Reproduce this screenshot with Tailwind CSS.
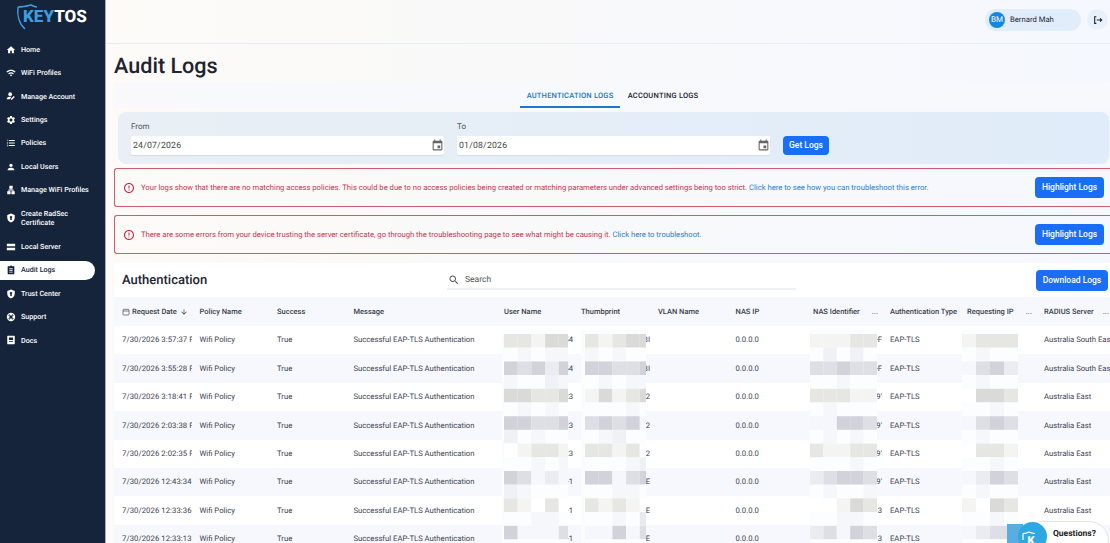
<!DOCTYPE html>
<html lang="en">
<head>
  <meta charset="UTF-8" />
  <title>Audit Logs</title>
  <script src="https://cdn.jsdelivr.net/npm/@tailwindcss/browser@4"></script>
</head>
<body class="h-[543px] w-[1110px] overflow-hidden flex font-['Roboto',sans-serif] [text-rendering:geometricPrecision] text-[#1d2430] bg-gradient-to-r from-[#fdfbf7] via-[#f9f9fa] to-[#f5f8fe]">

  <!-- sidebar -->
  <aside class="w-[106px] shrink-0 bg-[#15233b] border-r border-[#a9aebb] text-white">
    <div class="h-[38px] pl-[17px] pt-[4px] flex items-start relative">
      <svg class="absolute left-[16px] top-[4px] w-[24px] h-[27px]" viewBox="0 0 24 27" fill="none" stroke="#3aa0e0" stroke-width="1.5"><path d="M2 3 C7 3 11 2 15 1 C17 2 19 3 21 3"/><path d="M2 3 C1 11 3 20 9 25"/></svg>
      <span class="relative ml-[6px] mt-[3px] text-[17px] leading-[20px] font-extrabold"><span class="text-[#3aa0e0]">KEY</span>TOS</span>
    </div>
    <nav id="nav" class="mt-[2px] pr-[10px] flex flex-col gap-[4px] text-[7.150px] leading-[9.700px] font-medium"></nav>
  </aside>

  <!-- main -->
  <main class="flex-1 min-w-0 flex flex-col">
    <header class="h-[44px] shrink-0 border-b border-[#e8ecf4] flex items-start justify-end pt-[9px] pr-[2px] gap-[6px]">
      <div class="w-[96px] h-[22px] rounded-full bg-[#e1edfb] flex items-center pl-[4px] gap-[5px]">
        <span class="w-[16px] h-[16px] rounded-full bg-[#1288e0] text-white text-[8px] flex items-center justify-center">BM</span>
        <span class="text-[7.700px]">Bernard Mah</span>
      </div>
      <div class="w-[21px] h-[21px] rounded-full bg-[#e8f1fb] flex items-center justify-center">
        <svg class="w-[10px] h-[10px]" viewBox="0 0 12 12" fill="none" stroke="#1d2430" stroke-width="1.3"><path d="M4 2H2v8h2M4.500 6h6M8.500 4l2 2-2 2"/></svg>
      </div>
    </header>

    <div class="pl-[8px]">
      <h1 class="h-[38px] text-[21.600px] leading-[46px] font-medium">Audit Logs</h1>

      <!-- tabs -->
      <div class="h-[26px] bg-[#f7f9fd]/80 flex justify-center pl-[2px] text-[7.500px] font-medium tracking-[0.200px]">
        <div class="w-[100px] h-[26px] leading-[27px] text-center text-[#2077c4] border-b-2 border-[#2077c4]">AUTHENTICATION LOGS</div>
        <div class="w-[86px] h-[26px] leading-[27px] text-center">ACCOUNTING LOGS</div>
      </div>

      <!-- date filter -->
      <div class="ml-[4px] mr-[1px] mt-[4px] h-[52px] rounded-lg bg-gradient-to-r from-[#e9eff5] to-[#e0ecf9] pl-[13px] flex items-end pb-[9px]">
        <div class="w-[313px]">
          <div class="text-[8px] leading-[12px] mb-[3px] text-[#555]">From</div>
          <div class="h-[19px] bg-white rounded-[2px] shadow-[0_1px_1px_#d5dbe3] flex items-center justify-between pt-[2px] pl-[2px] pr-[0.500px] text-[8.700px] text-[#444] tracking-[0.200px]">24/07/2026
            <svg class="w-[13px] h-[13px] mb-[2px]" viewBox="0 0 24 24" fill="#666"><path d="M17 12h-5v5h5v-5zM16 1v2H8V1H6v2H5c-1.110 0-1.990.900-1.990 2L3 19c0 1.100.890 2 2 2h14c1.100 0 2-.900 2-2V5c0-1.100-.900-2-2-2h-1V1h-2zm3 18H5V8h14v11z"/></svg>
          </div>
        </div>
        <div class="w-[313px] ml-[13px]">
          <div class="text-[8px] leading-[12px] mb-[3px] text-[#555]">To</div>
          <div class="h-[19px] bg-white rounded-[2px] shadow-[0_1px_1px_#d5dbe3] flex items-center justify-between pt-[2px] pl-[2px] pr-[0.500px] text-[8.700px] text-[#444] tracking-[0.200px]">01/08/2026
            <svg class="w-[13px] h-[13px] mb-[2px]" viewBox="0 0 24 24" fill="#666"><path d="M17 12h-5v5h5v-5zM16 1v2H8V1H6v2H5c-1.110 0-1.990.900-1.990 2L3 19c0 1.100.890 2 2 2h14c1.100 0 2-.900 2-2V5c0-1.100-.900-2-2-2h-1V1h-2zm3 18H5V8h14v11z"/></svg>
          </div>
        </div>
        <button class="ml-[13px] w-[46px] h-[19px] rounded-[4px] bg-[#1a6ef5] text-white text-[8.500px] font-medium">Get Logs</button>
      </div>

      <!-- alerts -->
      <div class="mt-[4px] h-[39px] border border-r-0 border-[#cf5b6b] rounded-l-[3px] flex items-center pl-[8px] pr-[6px] text-[7.650px] text-[#c8334f]">
        <svg class="w-[12px] h-[12px] shrink-0" viewBox="0 0 24 24" fill="#c8203f"><path d="M11 15h2v2h-2zm0-8h2v6h-2zm.990-5C6.470 2 2 6.480 2 12s4.470 10 9.990 10C17.520 22 22 17.520 22 12S17.520 2 11.990 2zM12 20c-4.420 0-8-3.580-8-8s3.580-8 8-8 8 3.580 8 8-3.580 8-8 8z"/></svg>
        <p class="ml-[6px] pt-[1px] flex-1 whitespace-nowrap">Your logs show that there are no matching access policies. This could be due to no access policies being created or matching parameters under advanced settings being too strict. <a class="text-[#2b7fd0]">Click here to see how you can troubleshoot this error.</a></p>
        <button class="w-[69px] h-[21px] rounded-[4px] bg-[#1a6ef5] text-white text-[8.500px] font-medium">Highlight Logs</button>
      </div>
      <div class="mt-[8px] h-[39px] border border-r-0 border-[#cf5b6b] rounded-l-[3px] flex items-center pl-[8px] pr-[6px] text-[7.650px] text-[#c8334f]">
        <svg class="w-[12px] h-[12px] shrink-0" viewBox="0 0 24 24" fill="#c8203f"><path d="M11 15h2v2h-2zm0-8h2v6h-2zm.990-5C6.470 2 2 6.480 2 12s4.470 10 9.990 10C17.520 22 22 17.520 22 12S17.520 2 11.990 2zM12 20c-4.420 0-8-3.580-8-8s3.580-8 8-8 8 3.580 8 8-3.580 8-8 8z"/></svg>
        <p class="ml-[6px] pt-[1px] flex-1 whitespace-nowrap">There are some errors from your device trusting the server certificate, go through the troubleshooting page to see what might be causing it. <a class="text-[#2b7fd0]">Click here to troubleshoot.</a></p>
        <button class="w-[69px] h-[21px] rounded-[4px] bg-[#1a6ef5] text-white text-[8.500px] font-medium">Highlight Logs</button>
      </div>

      <!-- table card -->
      <section class="mt-[9px] bg-white">
        <div class="h-[34px] flex items-start pl-[8px] pr-[2px]">
          <h2 class="w-[325px] mt-[9px] text-[13px] leading-[18px] font-medium">Authentication</h2>
          <div class="w-[349px] h-[20px] mt-[7px] pt-[2px] border-b-2 border-[#eef1f5] flex items-center pl-[1px] text-[8.500px] text-[#555]">
            <svg class="w-[12px] h-[12px] mr-[5px]" viewBox="0 0 24 24" fill="#555"><path d="M15.500 14h-.790l-.280-.270C15.410 12.590 16 11.110 16 9.500 16 5.910 13.090 3 9.500 3S3 5.910 3 9.500 5.910 16 9.500 16c1.610 0 3.090-.590 4.230-1.570l.270.280v.790l5 4.990L20.490 19l-4.990-5zm-6 0C7.010 14 5 11.990 5 9.500S7.010 5 9.500 5 14 7.010 14 9.500 11.990 14 9.500 14z"/></svg>
            Search
          </div>
          <button class="ml-auto w-[72px] h-[21px] mt-[7px] rounded-[4px] bg-[#1a6ef5] text-white text-[8.500px] font-medium">Download Logs</button>
        </div>
        <div id="table" class="relative w-[999px] text-[7.700px] text-[#3b4250]"></div>
      </section>
    </div>
  </main>

  <!-- chat widget -->
  <div class="absolute left-[1007px] top-[524px] w-[16px] h-[19px] bg-[#5aade0]"></div>
  <div class="absolute left-[1022px] top-[521px] w-[87px] h-[40px] rounded-[20px] bg-white border border-[#e4e4e4] pl-[30px] pt-[6px] text-[8.500px] font-bold text-[#222]">Questions?</div>
  <div class="absolute left-[1018px] top-[522px] w-[29px] h-[29px] rounded-full bg-[#2ea8e0] flex justify-center pt-[12px]">
    <svg class="absolute left-[4px] top-[9px] w-[14px] h-[16px]" viewBox="0 0 14 16" fill="none" stroke="#fff" stroke-width="1.200"><path d="M1 2.500C4 2.500 5 2 7 1c2 1 4 1.500 6 1.500M1 2.500V9"/></svg>
    <span class="relative mr-[3px] text-white text-[11px] leading-[14px] font-black">K</span>
  </div>

  <script>
    const icons = {
      home: '<path d="M10 20v-6h4v6h5v-8h3L12 3 2 12h3v8z"/>',
      wifi: '<path d="M1 9l2 2c4.970-4.970 13.030-4.970 18 0l2-2C16.930 2.930 7.080 2.930 1 9zm8 8l3 3 3-3c-1.650-1.660-4.340-1.660-6 0zm-4-4l2 2c2.760-2.760 7.240-2.760 10 0l2-2C15.140 9.140 8.870 9.140 5 13z"/>',
      account: '<circle cx="10" cy="7.500" r="4.500"/><path d="M2 20v-2c0-3 4-4.500 8-4.500 1 0 2 .100 3 .300L9.500 20z"/><path d="M12 21v-2.500l6.500-6.500 2.500 2.500-6.500 6.500z"/>',
      gear: '<path d="M19.140 12.940c.040-.300.060-.610.060-.940 0-.320-.020-.640-.070-.940l2.030-1.580c.180-.140.230-.410.120-.610l-1.920-3.320c-.120-.220-.370-.290-.590-.220l-2.390.960c-.500-.380-1.030-.700-1.620-.940l-.360-2.540c-.040-.240-.240-.410-.480-.410h-3.840c-.240 0-.430.170-.470.410l-.360 2.540c-.590.240-1.130.570-1.620.940l-2.390-.960c-.220-.080-.470 0-.590.220L2.740 8.870c-.120.210-.080.470.120.610l2.030 1.580c-.050.300-.090.630-.090.940s.020.640.070.940l-2.030 1.580c-.180.140-.230.410-.120.610l1.920 3.320c.120.220.370.290.590.220l2.390-.960c.500.380 1.030.700 1.620.940l.360 2.540c.050.240.240.410.480.410h3.840c.240 0 .440-.170.470-.410l.360-2.540c.590-.240 1.130-.560 1.620-.940l2.390.960c.220.080.470 0 .590-.220l1.920-3.320c.120-.220.070-.470-.120-.610l-2.010-1.580zM12 15.600c-1.980 0-3.600-1.620-3.600-3.600s1.620-3.600 3.600-3.600 3.600 1.620 3.600 3.600-1.620 3.600-3.600 3.600z"/>',
      list: '<path d="M2 17h2v.500H3v1h1v.500H2v1h3v-4H2v1zm1-9h1V4H2v1h1v3zm-1 3h1.800L2 13.100v.900h3v-1H3.200L5 10.900V10H2v1zm5-6v2h14V5H7zm0 14h14v-2H7v2zm0-6h14v-2H7v2z"/>',
      person: '<path d="M12 12c2.210 0 4-1.790 4-4s-1.790-4-4-4-4 1.790-4 4 1.790 4 4 4zm0 2c-2.670 0-8 1.340-8 4v2h16v-2c0-2.660-5.330-4-8-4z"/>',
      lan: '<path d="M13 22h8v-7h-3v-4h-5V9h3V2H8v7h3v2H6v4H3v7h8v-7H8v-2h8v2h-3z"/>',
      shield: '<path fill-rule="evenodd" d="M12 1L3 5v6c0 5.550 3.840 10.740 9 12 5.160-1.260 9-6.450 9-12V5l-9-4zm0 6a3 3 0 0 0-1.500 5.600L10 17h4l-.500-4.400A3 3 0 0 0 12 7z"/>',
      server: '<path d="M2 20h20v-6H2v6zM2 4v6h20V4H2z"/>',
      clipboard: '<path d="M19 3h-4.180C14.400 1.840 13.300 1 12 1c-1.300 0-2.400.840-2.820 2H5c-.600 0-1 .400-1 1v17c0 .600.400 1 1 1h14c.600 0 1-.400 1-1V4c0-.600-.400-1-1-1zm-3 15H8v-2h8v2zm0-4H8v-2h8v2zm0-4H8V8h8v2z"/>',
      support: '<path fill-rule="evenodd" d="M12 2a10 10 0 1 0 0 20 10 10 0 0 0 0-20zm0 6a4 4 0 1 1 0 8 4 4 0 0 1 0-8zM5.500 8.500l2.300 1.300a5 5 0 0 1 2-2L8.500 5.500a8 8 0 0 0-3 3zm10-3l-1.300 2.300a5 5 0 0 1 2 2l2.300-1.300a8 8 0 0 0-3-3zm3 10l-2.300-1.300a5 5 0 0 1-2 2l1.300 2.300a8 8 0 0 0 3-3zm-10 3l1.300-2.300a5 5 0 0 1-2-2l-2.300 1.300a8 8 0 0 0 3 3z"/>',
      docs: '<path fill-rule="evenodd" d="M4 2h16a1 1 0 0 1 1 1v18a1 1 0 0 1-1 1H4a1 1 0 0 1-1-1V3a1 1 0 0 1 1-1zm3 4v6h10V6H7zm0 9v2h10v-2H7z"/>'
    };

    const navItems = [
      ['home', 'Home'], ['wifi', 'WiFi Profiles'], ['account', 'Manage Account'], ['gear', 'Settings'],
      ['list', 'Policies'], ['person', 'Local Users'], ['lan', 'Manage WiFi Profiles'],
      ['shield', 'Create RadSec<br>Certificate'], ['server', 'Local Server'], ['clipboard', 'Audit Logs'],
      ['shield', 'Trust Center'], ['support', 'Support'], ['docs', 'Docs']
    ];

    document.getElementById('nav').innerHTML = navItems.map(([icon, label]) => {
      const active = label === 'Audit Logs';
      const two = label.includes('<br>');
      return `<a class="flex items-center pl-[6px] gap-[5px] rounded-r-full ${two ? 'h-[29.400px]' : 'h-[19.400px]'} ${active ? 'bg-white text-[#15233b]' : ''}">
        <svg class="w-[10px] h-[10px] shrink-0" viewBox="0 0 24 24" fill="${active ? '#15233b' : '#fff'}">${icons[icon]}</svg><span>${label}</span></a>`;
    }).join('');

    // table
    const cols = 'grid grid-cols-[77.500px_77.500px_76.500px_150.500px_77px_77px_77.500px_77.500px_77px_77px_77px_77px]';
    const dots = '<span class="pr-[4px] text-[#777]">...</span>';
    const heads = ['<svg class="w-[8px] h-[8px] mr-[2px] shrink-0" viewBox="0 0 24 24" fill="none" stroke="#444" stroke-width="2"><rect x="3" y="4" width="18" height="17" rx="2"/><path d="M3 9h18"/></svg>Request Date<svg class="w-[8px] h-[8px] ml-[3px] shrink-0" viewBox="0 0 24 24" fill="#444"><path d="M20 12l-1.410-1.410L13 16.170V4h-2v12.170l-5.580-5.590L4 12l8 8 8-8z"/></svg>',
      'Policy Name', 'Success', 'Message', 'User Name', 'Thumbprint', 'VLAN Name', 'NAS IP',
      `<span class="flex-1">NAS Identifier</span>${dots}`, 'Authentication Type',
      `<span class="flex-1">Requesting IP</span>${dots}`, `<span class="flex-1">RADIUS Server</span>${dots}`];

    const rows = [
      ['7/30/2026 3:57:37 PM', '54', '8I', '-F', 'Australia South East'],
      ['7/30/2026 3:55:28 PM', '54', '8I', '-F', 'Australia South East'],
      ['7/30/2026 3:18:41 PM', '23', '2', "9'", 'Australia East'],
      ['7/30/2026 2:03:38 PM', '23', '2', "9'", 'Australia East'],
      ['7/30/2026 2:02:35 PM', '23', '2', "9'", 'Australia East'],
      ['7/30/2026 12:43:34 PM', '-1', 'E', "9'", 'Australia East'],
      ['7/30/2026 12:33:36 PM', '-1', 'E', '3', 'Australia East'],
      ['7/30/2026 12:33:13 PM', '-1', 'E', '3', 'Australia East']
    ];

    const cell = 'pl-[8px] overflow-hidden whitespace-nowrap flex items-center';
    let html = `<div class="${cols} h-[29px] bg-[#f6f8fe] font-medium text-[7.500px] text-[#3a3f4b]">` +
      heads.map(h => `<div class="${cell}">${h}</div>`).join('') + '</div>';
    rows.forEach((r, i) => {
      const vals = [`<span class="tracking-[0.080px]">${r[0]}</span>`, 'Wifi Policy', 'True', 'Successful EAP-TLS Authentication',
        `<span class="ml-auto">${r[1]}</span>`, `<span class="ml-auto">${r[2]}</span>`, '', '0.0.0.0',
        `<span class="ml-auto">${r[3]}</span>`, 'EAP-TLS', '', r[4]];
      html += `<div class="${cols} h-[28.400px] ${i % 2 ? 'bg-[#f6f8fd]' : 'bg-white'}">` +
        vals.map(v => `<div class="${cell}">${v}</div>`).join('') + '</div>';
    });

    // pixelated patches hiding the sensitive columns
    const warm = ['#ffffff', '#f4f4f2', '#e6e6e3', '#dadad8'];
    const cool = ['#f6f7fc', '#eaecf1', '#dddfe5', '#d2d3da'];
    const faint = ['#fcfdff', '#f6f7fb', '#eff1f6', '#e8eaf0'];
    const patches = [
      { x: 504, w: 13.7, left: 502, right: 568, v: ['22133', '32313', '33223', '33223', '01221', '32010', '21020', '30002'], s: ['01011', '10021', '01010', '20100', '00101', '21000', '00110', '00000'] },
      { x: 585, w: 13.7, left: 581, right: 646, v: ['21233', '33223', '13123', '23230', '22120', '33023', '21210', '00302'], s: ['10100', '01011', '00010', '01200', '00012', '00110', '00103', '00000'] },
      { x: 810, w: 13.4, left: 810, right: 877, v: ['11122', '22322', '22211', '00332', '21122', '12332', '00132', '12032'], s: ['02020', '00100', '01000', '01010', '00010', '01001', '00110', '00000'] },
      { x: 962, w: 14, left: 962, right: 1018, v: ['1222', '0231', '0332', '0232', '0221', '0132', '1032', '0122'], s: ['0100', '0100', '0010', '0100', '0010', '0100', '0010', '0000'] }
    ];
    let rects = '';
    patches.forEach(p => {
      rects += `<rect x="${p.left}" y="330" width="${p.right - p.left}" height="213" fill="#fbfcfe"/>`;
      p.v.forEach((line, i) => {
        const y = 334 + i * 27.4;
        const pal = i % 2 ? cool : warm;
        const block = (c, j, top, colours) => {
          const x = p.x + j * p.w;
          const w = Math.min(p.w, p.right - x);
          rects += `<rect x="${x}" y="${top}" width="${w}" height="13.700" fill="${colours[+c]}"/>`;
        };
        [...line].forEach((c, j) => block(c, j, y, pal));
        [...p.s[i]].forEach((c, j) => block(c, j, y + 13.7, faint));
      });
    });
    html += `<svg class="absolute left-0 top-0 w-[996px] h-[246px]" viewBox="114 297 996 246">${rects}</svg>`;
    document.getElementById('table').innerHTML = html;
  </script>
</body>
</html>
